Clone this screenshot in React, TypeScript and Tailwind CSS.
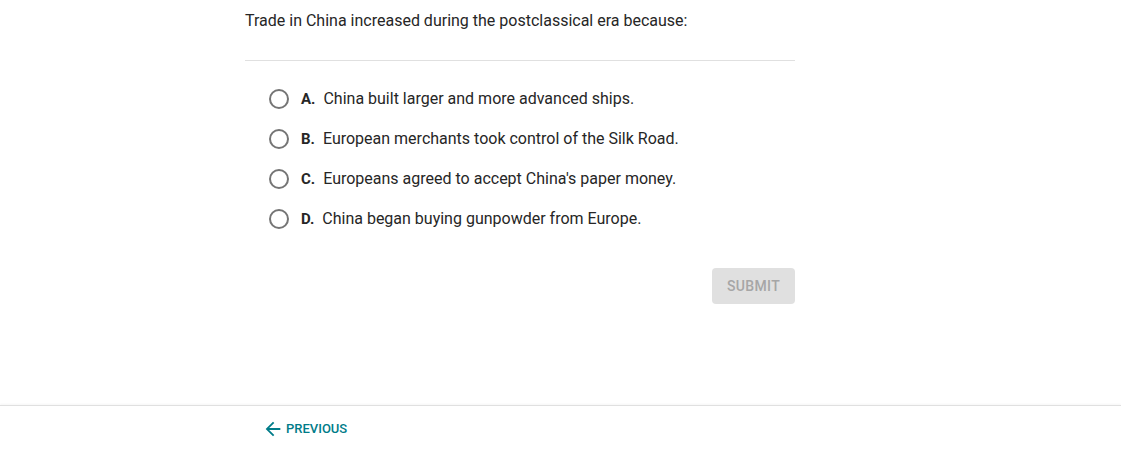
import React from 'react';

const options = [
  { letter: 'A.', text: 'China built larger and more advanced ships.' },
  { letter: 'B.', text: 'European merchants took control of the Silk Road.' },
  { letter: 'C.', text: "Europeans agreed to accept China's paper money." },
  { letter: 'D.', text: 'China began buying gunpowder from Europe.' },
];

export default function App() {
  return (
    <div className="w-[1121px] h-[453px] bg-white flex flex-col text-[#262626]" style={{ fontFamily: 'Roboto, sans-serif' }}>
      <div className="flex-1">
        <div className="ml-[245px] w-[550px]">
          <div className="pt-[10px] pb-[28px] text-[16px] leading-[22px] border-b border-[#e0e0e0]">
            Trade in China increased during the postclassical era because:
          </div>
          <div className="pt-[18px] pl-[24px] flex flex-col">
            {options.map((o) => (
              <label key={o.letter} className="flex items-center h-[40px] cursor-pointer">
                <span className="w-[20px] h-[20px] rounded-full border-2 border-[#757575] mr-[12px] shrink-0" />
                <span className="font-bold text-[15px] mr-[8px]">{o.letter}</span>
                <span className="text-[16px]">{o.text}</span>
              </label>
            ))}
          </div>
          <div className="flex justify-end mt-[29px]">
            <button className="w-[83px] h-[36px] rounded-[4px] bg-[#e0e0e0] text-[#a6a6a6] text-[14px] font-medium tracking-wide">
              SUBMIT
            </button>
          </div>
        </div>
      </div>
      <div className="h-[48px] border-t border-[#e0e0e0] shadow-[0_-1px_2px_rgba(0,0,0,0.04)] flex items-center">
        <button className="ml-[262px] -mt-[2px] flex items-center gap-[2px] text-[#007c89] text-[13px] font-medium">
          <svg width="22" height="22" viewBox="0 0 24 24" fill="currentColor">
            <path d="M20 11H7.83l5.59-5.59L12 4l-8 8 8 8 1.41-1.41L7.83 13H20v-2z" />
          </svg>
          PREVIOUS
        </button>
      </div>
    </div>
  );
}
